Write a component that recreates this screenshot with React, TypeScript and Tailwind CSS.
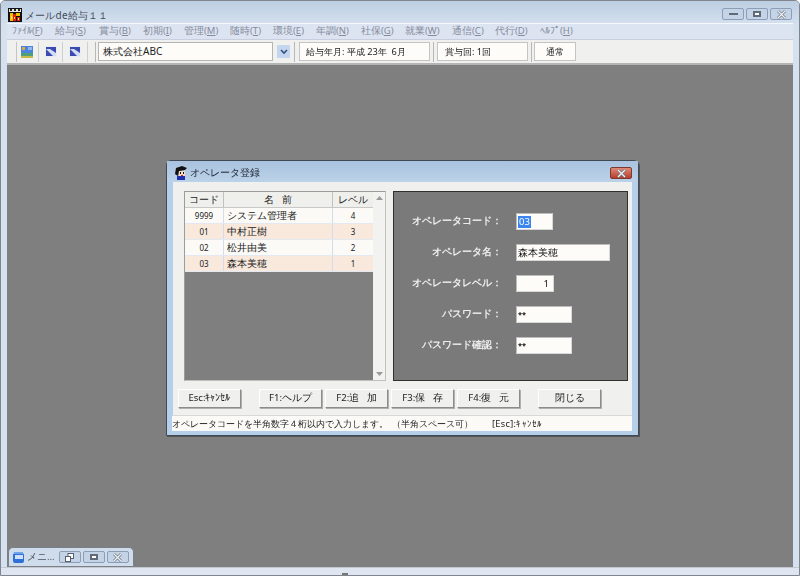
import React from "react";

const F = "font-['Noto_Sans_CJK_JP','Noto_Sans',sans-serif]";

const menus = [
  ["ﾌｧｲﾙ(", "F", ")", "w-[43px]"],
  ["給与(", "S", ")", "w-[44px]"],
  ["賞与(", "B", ")", "w-[44px]"],
  ["初期(", "I", ")", "w-[41px]"],
  ["管理(", "M", ")", "w-[46px]"],
  ["随時(", "T", ")", "w-[43px]"],
  ["環境(", "E", ")", "w-[43px]"],
  ["年調(", "N", ")", "w-[45px]"],
  ["社保(", "G", ")", "w-[44px]"],
  ["就業(", "W", ")", "w-[47px]"],
  ["通信(", "C", ")", "w-[43px]"],
  ["代行(", "D", ")", "w-[45px]"],
  ["ﾍﾙﾌﾟ(", "H", ")", "w-[40px]"],
];

const rows = [
  ["9999", "システム管理者", "4", false],
  ["01", "中村正樹", "3", true],
  ["02", "松井由美", "2", false],
  ["03", "森本美穂", "1", true],
] as const;

function AppIcon() {
  return (
    <svg width="14" height="14" viewBox="0 0 14 14" className="shrink-0">
      <rect width="14" height="14" fill="#111" />
      <rect x="1" y="1" width="12" height="3" fill="#e8e8e0" />
      <path d="M2 1h2v2H2zM6 1h2v2H6zM10 1h2v2h-2z" fill="#222" />
      <path d="M2 5h3v8H2zM8 5h4v3H8z" fill="#f0c000" />
      <path d="M5 6h3v7H5zM9 9h3v4H9z" fill="#e02010" />
      <path d="M3 8h1v3H3zM6 9h1v2H6zM10 10h1v2h-1z" fill="#ffe860" />
    </svg>
  );
}

function ToolIcon({ first }: { first?: boolean }) {
  return first ? (
    <svg width="12" height="12" viewBox="0 0 12 12">
      <rect width="12" height="12" fill="#4a84dc" />
      <rect y="7" width="12" height="3" fill="#4f9f78" />
      <rect y="10" width="12" height="2" fill="#c8b848" />
      <rect x="1" y="1" width="3" height="3" fill="#d8a850" />
      <rect x="7" y="1" width="4" height="3" fill="#8fb8ee" />
    </svg>
  ) : (
    <svg width="12" height="11" viewBox="0 0 12 11">
      <rect width="12" height="11" fill="#e6ebf6" />
      <rect x="1" y="1" width="10" height="9" fill="#3a4ab0" />
      <path d="M1 3 L5 3 L11 7 L11 10 L8 10 Z" fill="#d4ddf6" />
    </svg>
  );
}

function XIcon() {
  return (
    <svg width="11" height="9" viewBox="0 0 11 9">
      <path d="M2 1l7 7M9 1L2 8" stroke="#6d7786" strokeWidth="2.6" />
      <path d="M2 1l7 7M9 1L2 8" stroke="#f2f4f8" strokeWidth="1.2" />
    </svg>
  );
}

function CapBtn({ children }: { children: React.ReactNode }) {
  return (
    <div className="w-[22px] h-[12px] flex items-center justify-center rounded-[2px] border border-[#8e9db6] bg-[#c4d3e6]">
      {children}
    </div>
  );
}

function WinButton({ w, children }: { w: string; children: React.ReactNode }) {
  return (
    <button className={`${w} h-[19px] shrink-0 flex items-center justify-center bg-[#f0f0ee] border border-t-white border-l-white border-r-[#8c8c8c] border-b-[#8c8c8c] shadow-[1px_1px_0_#b0b0b0] text-[9.5px] text-[#222]`}>
      {children}
    </button>
  );
}

function FormRow({ label, w, value, align = "left", select, small }: { label: string; w: string; value: string; align?: string; select?: boolean; small?: boolean }) {
  return (
    <div className="flex items-center h-[17px]">
      <div className="w-[108px] text-right text-[9.5px] font-bold tracking-[0.05px] text-[#ececec] whitespace-nowrap">{label}</div>
      <div className={`${w} ml-[14px] h-[17px] bg-[#fdfcf8] border border-t-[#bdbdbd] border-l-[#bdbdbd] border-r-[#d8d8d8] border-b-[#d8d8d8] flex items-center leading-none text-[#111] ${small ? "text-[7.5px] font-bold" : "text-[9.5px]"} ${align === "right" ? "justify-end pr-[4px]" : "pl-[1px]"}`}>
        {select ? <span className="bg-[#3a86ee] text-white px-[1px] h-[12px] flex items-center">{value}</span> : value}
      </div>
    </div>
  );
}

export default function App() {
  return (
    <div className={`${F} w-[800px] h-[576px] overflow-hidden flex flex-col bg-[#d6e1ef] border border-[#80858e] rounded-t-[5px] text-black blur-[0.3px]`}>
      {/* title bar */}
      <div className="h-[22px] shrink-0 flex items-start pt-[7px] bg-gradient-to-b from-[#bccee2] to-[#d3dfee] pl-[7px] pr-[7px]">
        <AppIcon />
        <span className="ml-[3px] text-[10px] leading-[14px] tracking-[0.2px] text-[#444c5c] whitespace-nowrap">メールde給与１１</span>
        <div className="ml-auto flex gap-[2px]">
          <CapBtn>
            <span className="block w-[9px] h-[2px] bg-white border-[0.5px] border-[#606a78]" />
          </CapBtn>
          <CapBtn>
            <span className="block w-[8px] h-[6px] border-2 border-[#606a78] bg-white" />
          </CapBtn>
          <CapBtn>
            <XIcon />
          </CapBtn>
        </div>
      </div>
      {/* menu */}
      <div className="h-[16px] mx-[6px] shrink-0 flex items-center pl-[5px] bg-[#dde4f1] border-t border-[#f6f9fc] text-[9.5px] text-[#848b9c] whitespace-nowrap">
        {menus.map(([a, k, c, w]) => (
          <span key={k} className={`${w} shrink-0`}>
            {a}
            <span className="underline">{k}</span>
            {c}
          </span>
        ))}
      </div>
      {/* toolbar */}
      <div className="h-[26px] mx-[6px] shrink-0 flex items-center bg-[#f0f0ee] border-t border-[#c8cde0] border-b-2 border-b-[#b4b4b4] text-[9.2px] text-[#222] whitespace-nowrap">
        <div className="w-px h-[20px] ml-[9px] bg-[#c4c4c4]" />
        <div className="w-[21px] flex justify-center pr-[2px]"><ToolIcon first /></div>
        <div className="w-px h-[20px] bg-[#cfcfcf]" />
        <div className="w-[23px] flex justify-center"><ToolIcon /></div>
        <div className="w-px h-[20px] bg-[#cfcfcf]" />
        <div className="w-[24px] flex justify-center"><ToolIcon /></div>
        <div className="w-px h-[20px] bg-[#cfcfcf]" />
        <div className="w-px h-[20px] ml-[7px] bg-[#b8b8b8]" />
        <div className="ml-[2px] w-[175px] h-[19px] bg-[#fdfcf8] border border-[#b4b4b4] flex items-center pl-[4px] text-[10px]">株式会社ABC</div>
        <div className="ml-[4px] w-[13px] h-[13px] bg-[#c3d5ef] rounded-[1px] flex items-center justify-center">
          <svg width="8" height="6" viewBox="0 0 8 6"><path d="M1 1l3 3 3-3" fill="none" stroke="#33507f" strokeWidth="1.6" /></svg>
        </div>
        <div className="w-px h-[20px] ml-[4px] bg-[#b8b8b8]" />
        <div className="ml-[4px] w-[131px] h-[19px] bg-[#fdfcf8] border border-[#c4c4c4] flex items-center pl-[6px]">給与年月: 平成 23年&nbsp;&nbsp;6月</div>
        <div className="w-px h-[20px] ml-[3px] bg-[#b8b8b8]" />
        <div className="ml-[3px] w-[91px] h-[19px] bg-[#fdfcf8] border border-[#c4c4c4] flex items-center pl-[7px]">賞与回: 1回</div>
        <div className="w-px h-[20px] ml-[3px] bg-[#b8b8b8]" />
        <div className="ml-[2px] w-[42px] h-[19px] bg-[#fdfcf8] border border-[#c4c4c4] flex items-center justify-center">通常</div>
      </div>
      {/* MDI area */}
      <div className="relative flex-1 mx-[6px] pl-0 bg-[#7f7f7f]">
        {/* dialog */}
        <div className="absolute left-[159px] top-[95px] w-[473px] h-[276px] flex flex-col rounded-t-[5px] border border-[#3f4a56] bg-[#b5cfea] shadow-[1px_1px_0_#555]">
          <div className="h-[21px] shrink-0 flex items-center pt-[3px] pl-[7px] pr-[6px] bg-gradient-to-b from-[#a9c2de] to-[#bcd2e9]">
            <svg width="13" height="14" viewBox="0 0 13 14" className="shrink-0">
              <path d="M1 8 L2 2 L8 0 L13 2 L11 4 L5 5 L4 10 Z" fill="#111" />
              <rect x="5" y="5" width="6" height="5" fill="#f4dcc8" />
              <rect x="6" y="6" width="1" height="2" fill="#111" />
              <rect x="9" y="6" width="1" height="2" fill="#111" />
              <rect x="3" y="10" width="8" height="4" fill="#2030b0" />
              <rect x="7" y="9" width="2" height="1" fill="#d02020" />
            </svg>
            <span className="ml-[3px] text-[9.5px] text-[#222b38] whitespace-nowrap">オペレータ登録</span>
            <div className="ml-auto w-[22px] h-[12px] rounded-[2px] border border-[#7c3a30] bg-gradient-to-b from-[#e08a78] to-[#b83c28] flex items-center justify-center"><XIcon /></div>
          </div>
          <div className="flex-1 mx-[6px] flex flex-col bg-[#f0f0ee]">
            <div className="flex-1 flex pl-[11px] pt-[9px] gap-[7px]">
              {/* list */}
              <div className="w-[202px] h-[190px] flex border border-t-[#9c9c9c] border-l-[#9c9c9c] border-r-[#c0c0c0] border-b-[#c0c0c0]">
                <div className="w-[188px] flex flex-col bg-[#7f7f7f]">
                  <div className="h-[16px] flex text-[9.5px] text-[#222] bg-[#efefec] border-b border-[#c8c8c8] shrink-0">
                    <div className="w-[39px] text-center border-r border-[#c0c0c0] leading-[15px]">コード</div>
                    <div className="w-[109px] text-center border-r border-[#c0c0c0] leading-[15px]">名&nbsp;&nbsp;&nbsp;前</div>
                    <div className="flex-1 text-center leading-[15px]">レベル</div>
                  </div>
                  {rows.map(([c, n, l, alt]) => (
                    <div key={c} className={`h-[16px] flex text-[9.5px] text-[#222] leading-[15px] border-b border-[#e4e8f0] ${alt ? "bg-[#f8e9dc]" : "bg-[#fbfaf6]"}`}>
                      <div className="w-[39px] text-center border-r border-[#d4dcec] text-[8px]">{c}</div>
                      <div className="w-[109px] pl-[3px] border-r border-[#d4dcec]">{n}</div>
                      <div className="flex-1 text-center text-[8px]">{l}</div>
                    </div>
                  ))}
                </div>
                <div className="flex-1 bg-[#f2f2f0] flex flex-col items-center justify-between py-[4px]">
                  <svg width="7" height="4" viewBox="0 0 7 4"><path d="M3.5 0L7 4H0z" fill="#9a9a9a" /></svg>
                  <svg width="7" height="4" viewBox="0 0 7 4"><path d="M0 0h7L3.5 4z" fill="#9a9a9a" /></svg>
                </div>
              </div>
              {/* form */}
              <div className="w-[235px] h-[190px] bg-[#7a7a7a] border border-[#2f2f2f] pt-[21px] flex flex-col gap-[14px]">
                <FormRow label="オペレータコード：" w="w-[37px]" value="03" select />
                <FormRow label="オペレータ名：" w="w-[94px]" value="森本美穂" />
                <FormRow label="オペレータレベル：" w="w-[38px]" value="1" align="right" />
                <FormRow label="パスワード：" w="w-[56px]" value="**" small />
                <FormRow label="パスワード確認：" w="w-[56px]" value="**" small />
              </div>
            </div>
            {/* buttons */}
            <div className="h-[34px] shrink-0 flex items-start pt-[8px] pl-[5px]">
              <WinButton w="w-[63px]">Esc:ｷｬﾝｾﾙ</WinButton>
              <div className="w-[18px]" />
              <WinButton w="w-[63px]">F1:ヘルプ</WinButton>
              <div className="w-[3px]" />
              <WinButton w="w-[63px]">F2:追&nbsp;&nbsp;&nbsp;加</WinButton>
              <div className="w-[3px]" />
              <WinButton w="w-[63px]">F3:保&nbsp;&nbsp;&nbsp;存</WinButton>
              <div className="w-[3px]" />
              <WinButton w="w-[63px]">F4:復&nbsp;&nbsp;&nbsp;元</WinButton>
              <div className="w-[18px]" />
              <WinButton w="w-[63px]">閉じる</WinButton>
            </div>
            <div className="h-[16px] shrink-0 bg-[#fbfaf6] border-t border-[#d8d8d8] flex items-center text-[9.2px] text-[#222] whitespace-nowrap -ml-px">
              <span>オペレータコードを半角数字４桁以内で入力します。</span>
              <span className="ml-[4px]">（半角スペース可）</span>
              <span className="ml-[19px] tracking-[0.3px]">[Esc]:ｷｬﾝｾﾙ</span>
            </div>
          </div>
          <div className="h-[4px] shrink-0" />
        </div>
        {/* minimised window */}
        <div className="absolute left-[1px] bottom-0 w-[126px] h-[20px] flex items-center pl-[3px] rounded-t-[5px] border border-[#7a8088] bg-[#cfdcec]">
          <svg width="13" height="13" viewBox="0 0 13 13" className="shrink-0">
            <rect x="1" y="2" width="11" height="10" rx="2" fill="#2f6fd8" />
            <rect x="3" y="4" width="8" height="4" fill="#cfe2fb" />
            <rect x="2" y="1" width="9" height="2" fill="#6ea4ec" />
          </svg>
          <span className="ml-[2px] text-[9.5px] text-[#4a5260] whitespace-nowrap">メニ...</span>
          <div className="ml-[4px] flex gap-[2px]">
            <CapBtn>
              <svg width="9" height="9" viewBox="0 0 9 9"><rect x="3" y="0.5" width="5.5" height="5" fill="#fff" stroke="#556070" /><rect x="0.5" y="3.5" width="5" height="5" fill="#fff" stroke="#556070" /></svg>
            </CapBtn>
            <CapBtn>
              <span className="block w-[8px] h-[6px] border-2 border-[#606a78] bg-white" />
            </CapBtn>
            <CapBtn>
              <XIcon />
            </CapBtn>
          </div>
        </div>
      </div>
      {/* bottom frame */}
      <div className="h-[8px] shrink-0 bg-[#dfe6f2] border-t border-[#c4c8d0] flex items-end pl-[341px]">
        <div className="w-[6px] h-[2px] bg-[#777]" />
      </div>
    </div>
  );
}
